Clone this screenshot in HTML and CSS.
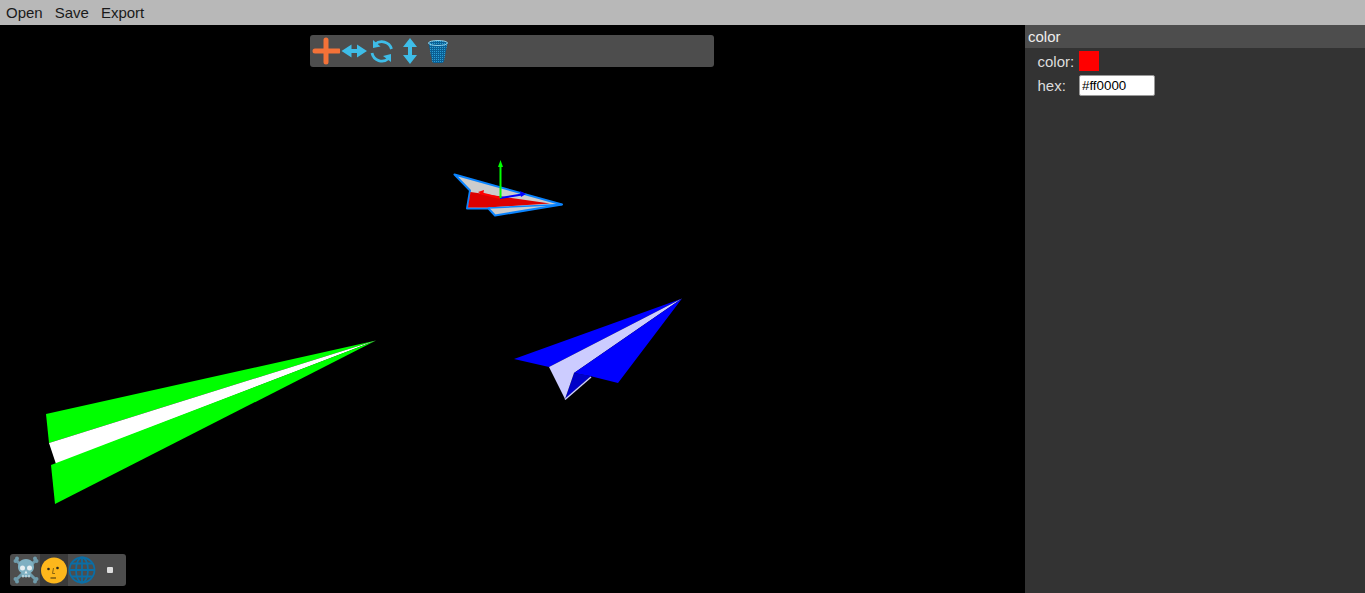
FILE: index.html
```html
<!DOCTYPE html>
<html>
<head>
	<title>Plane Editor</title>
	<link rel="stylesheet" href="styles.css">
</head>
<body>
	<div class="menu">
		<span class="menu-item">Open</span>
		<span class="menu-item">Save</span>
		<span class="menu-item">Export</span>
	</div>
	<div class="main">
		<div class="viewport">
			<svg class="scene" width="1025" height="568" viewBox="0 25 1025 568">
				<!-- green plane -->
				<polygon fill="#00ff00" points="46,414 376,340.500 49,443"/>
				<polygon fill="#ffffff" points="49,443 376,340.500 56,464"/>
				<polygon fill="#00ff00" points="51,465 376,340.500 55,504"/>
				<!-- blue plane -->
				<polygon fill="#0000c8" points="574,373 565,399 591,376"/>
				<line x1="565" y1="399.500" x2="591" y2="377" stroke="#ccccff" stroke-width="1.500"/>
				<polygon fill="#0000ff" points="514,359 682,298.500 549,367"/>
				<polygon fill="#ccccff" points="549,367 682,298.500 574,373 565,399"/>
				<polygon fill="#0000ff" points="574,373 682,298.500 618,383 590,376"/>
				<!-- selected plane -->
				<polygon fill="#cccccc" stroke="#0a84ff" stroke-width="2" stroke-linejoin="round" points="454.500,174.500 562,204.500 495,215.500 488.500,208.500 467,208.500 470,190.500"/>
				<polygon fill="#dd0000" points="470.500,192 550,203.500 488,207.500 468,207.500"/>
				<line x1="488" y1="208" x2="562" y2="204.500" stroke="#0a84ff" stroke-width="1.500"/>
				<!-- axes -->
				<line x1="500" y1="198" x2="480" y2="193" stroke="#ff0000" stroke-width="2"/>
				<polygon fill="#ff0000" points="478,192 484,190 483,195"/>
				<line x1="500" y1="198" x2="522" y2="194.500" stroke="#0000ff" stroke-width="2"/>
				<polygon fill="#0000ff" points="526,194 520,191 521,197"/>
				<line x1="500.500" y1="198" x2="500.500" y2="165" stroke="#00ff00" stroke-width="2"/>
				<polygon fill="#00ff00" points="500.500,160 503,167 498,167"/>
			</svg>

			<div class="toolbar toolbar-top">
				<div class="tool">
					<svg width="28" height="32" viewBox="0 0 28 32">
						<path d="M3 16H27M14 5V27" stroke="#f47238" stroke-width="5" stroke-linecap="round" fill="none"/>
					</svg>
				</div>
				<div class="tool">
					<svg width="28" height="32" viewBox="0 0 28 32">
						<path d="M1.500 16L11.500 9.500V14H17V9.500L27 16L17 22.500V18H11.500V22.500Z" fill="#3ebde8"/>
					</svg>
				</div>
				<div class="tool">
					<svg width="28" height="32" viewBox="0 0 28 32">
						<path d="M7 9.500A10 10 0 0 1 23.500 14M20.500 23.500A10 10 0 0 1 4 18" stroke="#3ebde8" stroke-width="2.800" fill="none"/>
						<path d="M5 5L12.500 11.500L5 13Z" fill="#3ebde8"/>
						<path d="M23 27L15 21L23 19Z" fill="#3ebde8"/>
					</svg>
				</div>
				<div class="tool">
					<svg width="28" height="32" viewBox="0 0 28 32">
						<path d="M14 3L21 12H16V20H21L14 29L7 20H12V12H7Z" fill="#3ebde8"/>
					</svg>
				</div>
				<div class="tool">
					<svg width="28" height="32" viewBox="0 0 28 32">
						<defs>
							<pattern id="mesh" width="2" height="2" patternUnits="userSpaceOnUse">
								<rect width="2" height="2" fill="#0a5f94"/>
								<rect width="1" height="1" fill="#2a9fd6"/>
							</pattern>
						</defs>
						<path d="M4.500 8H23.500L20 26Q19.500 28 18 28H10Q8.500 28 8 26Z" fill="url(#mesh)"/>
						<ellipse cx="14" cy="8" rx="9.500" ry="2.500" fill="url(#mesh)" stroke="#8fd0e8" stroke-width="1"/>
					</svg>
				</div>
			</div>

			<div class="toolbar toolbar-bottom">
				<div class="tool">
					<svg width="28" height="32" viewBox="0 0 28 32">
						<path d="M4 6L24 26M24 6L4 26" stroke="#6f9bab" stroke-width="3"/>
						<circle cx="3.500" cy="7" r="2" fill="#6f9bab"/>
						<circle cx="5" cy="4.500" r="2" fill="#6f9bab"/>
						<circle cx="24.500" cy="7" r="2" fill="#6f9bab"/>
						<circle cx="23" cy="4.500" r="2" fill="#6f9bab"/>
						<circle cx="3.500" cy="25" r="2" fill="#6f9bab"/>
						<circle cx="5" cy="27.500" r="2" fill="#6f9bab"/>
						<circle cx="24.500" cy="25" r="2" fill="#6f9bab"/>
						<circle cx="23" cy="27.500" r="2" fill="#6f9bab"/>
						<path d="M14 5C8.500 5 6 9 6 13C6 16 7.500 18 9.500 19V23H18.500V19C20.500 18 22 16 22 13C22 9 19.500 5 14 5Z" fill="#7fb0c2"/>
						<circle cx="10.500" cy="14" r="2.500" fill="#e6eef1"/>
						<circle cx="17.500" cy="14" r="2.500" fill="#e6eef1"/>
						<path d="M14 16.500L15.500 19.500H12.500Z" fill="#e6eef1"/>
						<path d="M11 21V23.500M14 21V23.500M17 21V23.500" stroke="#e6eef1" stroke-width="1"/>
					</svg>
				</div>
				<div class="tool tool-active">
					<svg width="28" height="32" viewBox="0 0 28 32">
						<circle cx="14" cy="16.500" r="13" fill="#fdb71c"/>
						<circle cx="8.500" cy="15" r="1.300" fill="#2e2a1c"/>
						<circle cx="17.500" cy="14" r="1.300" fill="#2e2a1c"/>
						<path d="M13.500 14L12.500 19.500H15" stroke="#8a6410" stroke-width="1" fill="none"/>
						<path d="M10.500 24H16" stroke="#5a4210" stroke-width="1.200"/>
					</svg>
				</div>
				<div class="tool">
					<svg width="28" height="32" viewBox="0 0 28 32">
						<g stroke="#0a6ea6" stroke-width="1.800" fill="none">
							<circle cx="14" cy="16" r="12.500"/>
							<ellipse cx="14" cy="16" rx="6" ry="12.500"/>
							<path d="M14 3.500V28.500M1.500 16H26.500M3.500 9.500H24.500M3.500 22.500H24.500"/>
						</g>
					</svg>
				</div>
				<div class="tool">
					<div class="dot"></div>
				</div>
			</div>
		</div>

		<div class="sidebar">
			<div class="sidebar-title">color</div>
			<div class="form">
				<label>color:</label>
				<div class="swatch"></div>
				<label>hex:</label>
				<input class="hex" type="text" value="#ff0000">
			</div>
		</div>
	</div>
</body>
</html>
```

FILE: styles.css
```css
html, body {
	margin: 0;
	height: 100%;
	overflow: hidden;
}

body {
	display: flex;
	flex-direction: column;
	font-family: "Liberation Sans", Arial, sans-serif;
	font-size: 15px;
	background-color: #000;
}

.menu {
	display: flex;
	height: 25px;
	line-height: 25px;
	background-color: #b8b8b8;
	color: #1a1a1a;
}

.menu-item {
	padding: 0 6px;
}

.main {
	display: flex;
	flex: 1;
	min-height: 0;
}

.viewport {
	position: relative;
	flex: 1;
	background-color: #000;
}

.scene {
	display: block;
}

.toolbar {
	position: absolute;
	display: flex;
	height: 32px;
	padding: 0 2px;
	box-sizing: border-box;
	background-color: #4d4d4d;
	border-radius: 3px;
}

.toolbar-top {
	top: 10px;
	left: 310px;
	width: 404px;
}

.toolbar-bottom {
	bottom: 7px;
	left: 10px;
	width: 116px;
}

.tool {
	display: flex;
	align-items: center;
	justify-content: center;
	width: 28px;
	height: 32px;
}

.tool-active {
	background-color: #3a3a3a;
}

.dot {
	width: 6px;
	height: 6px;
	border-radius: 1px;
	background-color: #dddddd;
}

.sidebar {
	width: 340px;
	background-color: #333333;
	color: #dddddd;
}

.sidebar-title {
	height: 23px;
	line-height: 23px;
	padding-left: 3px;
	background-color: #4d4d4d;
	color: #eeeeee;
}

.form {
	display: grid;
	grid-template-columns: 41.500px auto;
	justify-content: start;
	align-items: center;
	row-gap: 4px;
	padding: 3px 0 0 12.500px;
}

.swatch {
	width: 20px;
	height: 20px;
	background-color: #ff0000;
}

.hex {
	box-sizing: border-box;
	width: 76px;
	height: 21px;
	padding: 1px 2px;
	border: 1px solid #999;
	border-radius: 2px;
	font-family: "Liberation Sans", Arial, sans-serif;
	font-size: 13.33px;
	background-color: #fff;
	color: #000;
}
```
